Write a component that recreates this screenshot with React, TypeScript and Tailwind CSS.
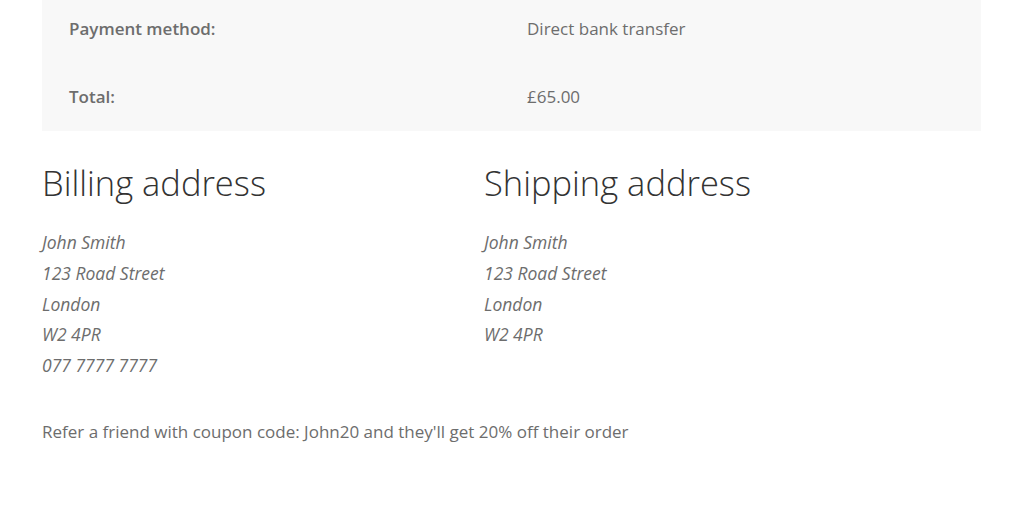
export default function App() {
  const billing = ["John Smith", "123 Road Street", "London", "W2 4PR", "077 7777 7777"]
  const shipping = ["John Smith", "123 Road Street", "London", "W2 4PR"]

  return (
    <div className="h-[512px] w-[1024px] overflow-hidden bg-white font-['Open_Sans',sans-serif] text-[#6d6d6d]">
      <div className="mx-[42px] w-[939px]">
        <div className="bg-[#f8f8f8] text-[17px]">
          <div className="grid h-[62px] grid-cols-[458px_1fr] items-center pb-[4px]">
            <span className="pl-[27px] font-semibold">Payment method:</span>
            <span className="pl-[27px]">Direct bank transfer</span>
          </div>
          <div className="grid h-[69px] grid-cols-[458px_1fr] items-center">
            <span className="pl-[27px] font-semibold">Total:</span>
            <span className="pl-[27px]">£65.00</span>
          </div>
        </div>

        <div className="grid grid-cols-[442px_1fr] pt-[30px]">
          <div>
            <h2 className="text-[34.5px] font-light leading-[44px] text-[#333333]">Billing address</h2>
            <address className="mt-[22px] text-[17.5px] leading-[30.8px]">
              {billing.map((line) => (
                <div key={line}>{line}</div>
              ))}
            </address>
          </div>
          <div>
            <h2 className="text-[34.5px] font-light leading-[44px] text-[#333333]">Shipping address</h2>
            <address className="mt-[22px] text-[17.5px] leading-[30.8px]">
              {shipping.map((line) => (
                <div key={line}>{line}</div>
              ))}
            </address>
          </div>
        </div>

        <p className="mt-[38px] text-[17px]">
          Refer a friend with coupon code: John20 and they'll get 20% off their order
        </p>
      </div>
    </div>
  )
}
